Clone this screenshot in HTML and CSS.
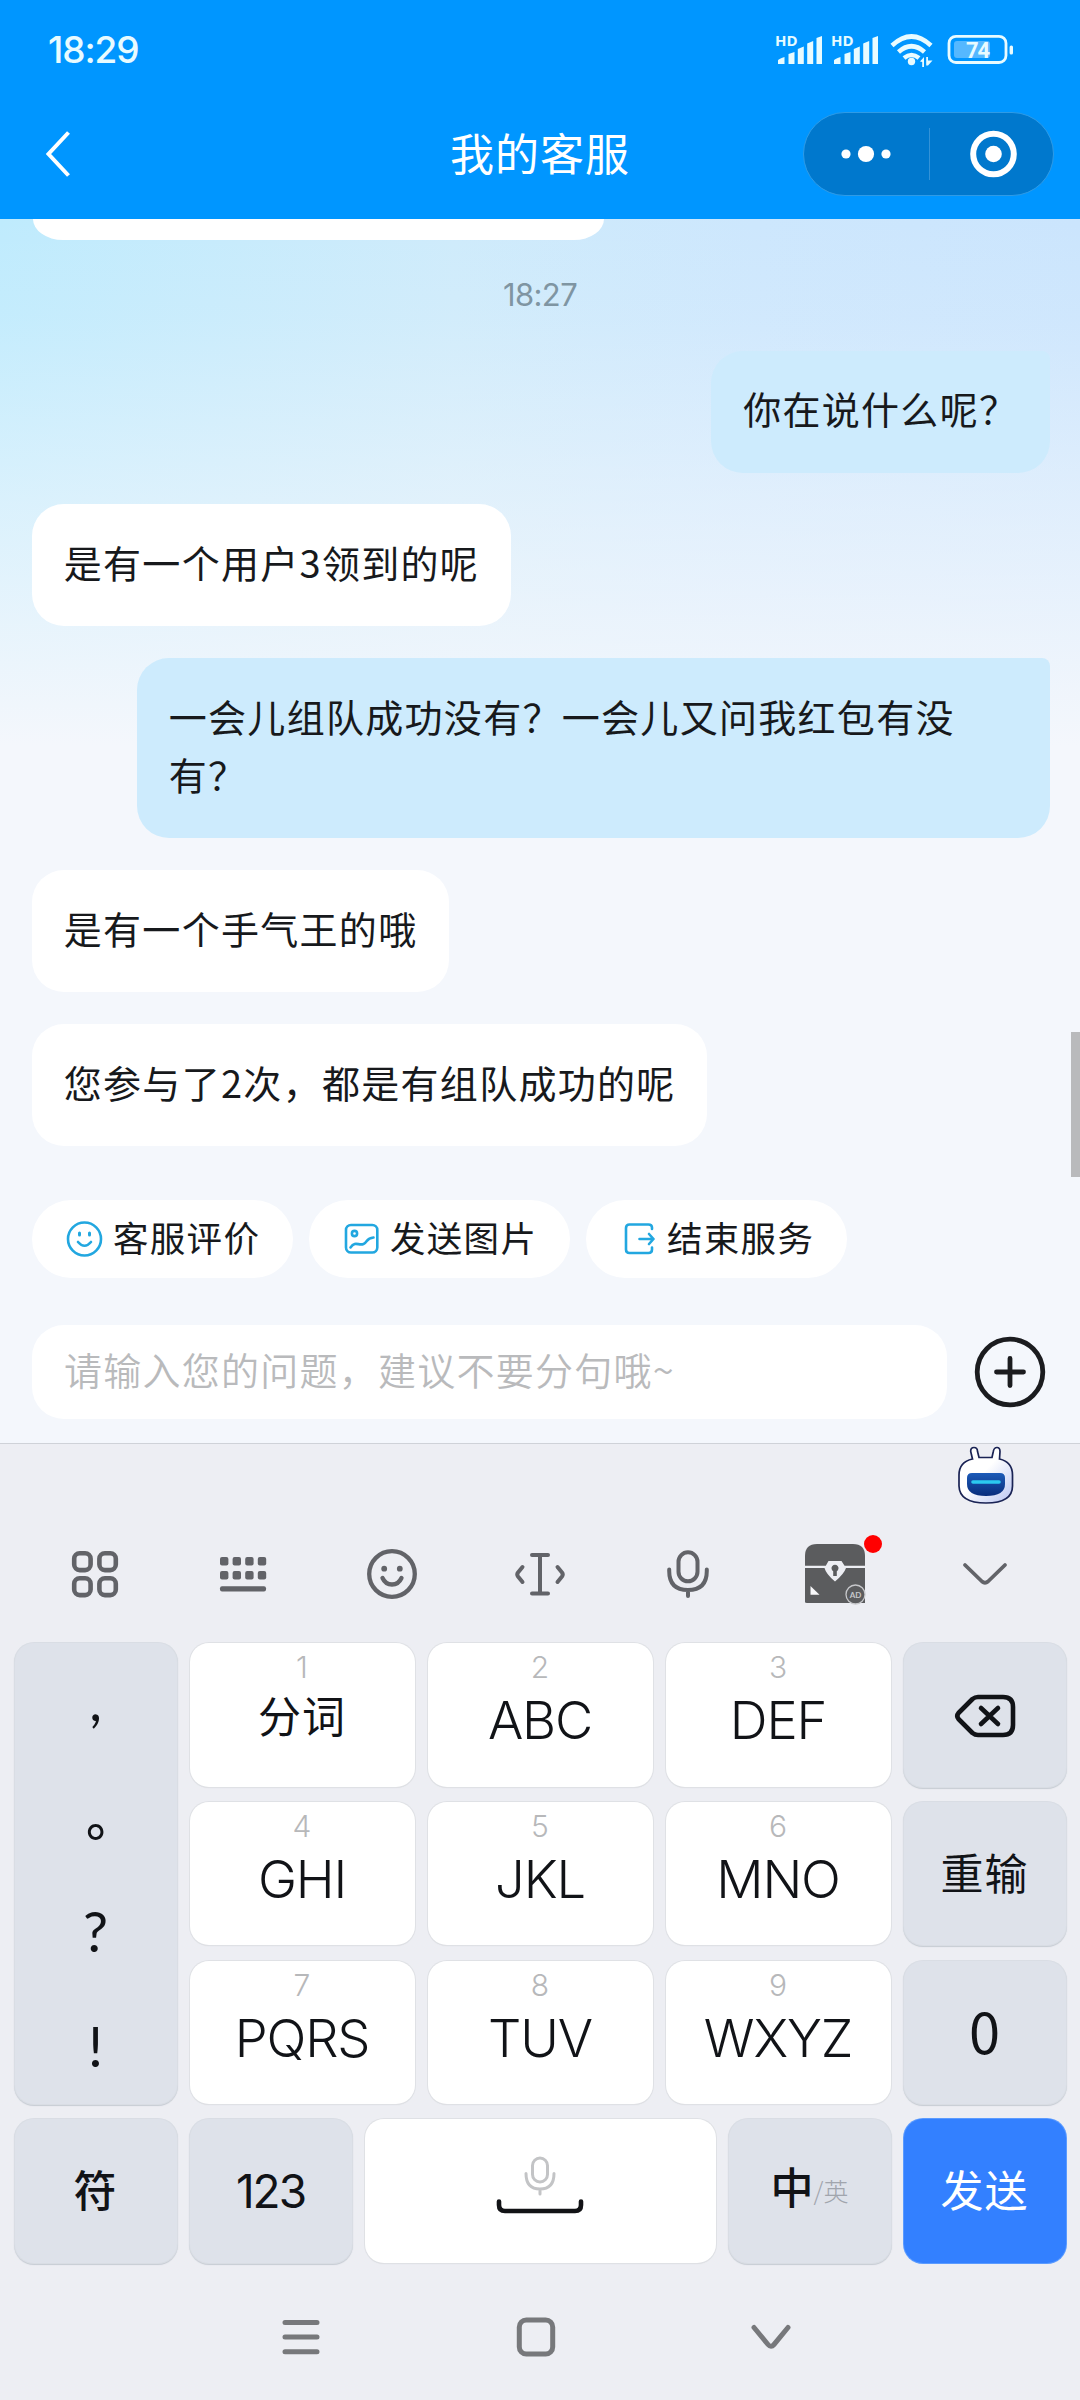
FILE: index.html
```html
<!DOCTYPE html>
<html lang="zh-CN">
<head>
<meta charset="utf-8">
<title>我的客服</title>
<link rel="stylesheet" href="styles.css">
</head>
<body>
<div class="phone">
  <header class="header">
    <div class="status">
      <span class="clock">18:29</span>
      <svg class="status-icons" width="240" height="40" viewBox="774 30 240 40" fill="#e8fbff">
        <g id="signal">
          <text x="775" y="46" class="hd">HD</text>
          <path d="M778 64v-3.500q0-1.500 6.500-3.500v7zM788.500 64v-10l6-2v12zM797.800 64v-15l6-2.500v17.500zM807.200 64v-20.500l6-2.500v23zM816.500 64v-26l5.500-2v28z"/>
        </g>
        <use href="#signal" x="56"/>
        <g fill="none" stroke="#e8fbff" stroke-width="4.600">
          <path d="M892 45.500Q911.500 27.500 931 45.500"/>
          <path d="M898.500 52Q911.500 40.500 924.500 52"/>
          <path d="M904 58Q911.500 52 919 58"/>
        </g>
        <circle cx="911.500" cy="61.500" r="3.700"/>
        <path d="M920 61.500l4-4.500v10h-1.800v-5zM926.200 57h1.800v3.500h4.500l-4.500 5h-1.800z"/>
        <rect x="949" y="36.300" width="57" height="26.200" rx="7" fill="none" stroke="#e8fbff" stroke-width="2.800"/>
        <rect x="954" y="41" width="36" height="17" rx="3" fill="#55b8ff"/>
        <rect x="1009.600" y="45.500" width="3.400" height="9" rx="1.500"/>
        <text x="977.500" y="58" class="level" text-anchor="middle">74</text>
      </svg>
    </div>
    <div class="titlebar">
      <svg class="back" width="30" height="50" viewBox="0 0 30 50" fill="none" stroke="#fff" stroke-width="4"><path d="M27.500 3.500L7.500 25l20 21.500"/></svg>
      <h1>我的客服</h1>
      <div class="capsule">
        <svg width="125" height="60" viewBox="0 0 125 60" fill="#fff"><circle cx="42" cy="30" r="4.600"/><circle cx="62" cy="30" r="8.100"/><circle cx="82" cy="30" r="4.600"/></svg>
        <i class="divider"></i>
        <svg width="123" height="60" viewBox="0 0 123 60" fill="#fff"><circle cx="63.500" cy="30" r="20.300" fill="none" stroke="#fff" stroke-width="6"/><circle cx="63.500" cy="30" r="8.300"/></svg>
      </div>
    </div>
  </header>

  <main class="chat">
    <div class="bubble previous"></div>
    <time class="stamp">18:27</time>
    <section class="messages">
      <p class="bubble mine">你在说什么呢？</p>
      <p class="bubble">是有一个用户3领到的呢</p>
      <p class="bubble mine">一会儿组队成功没有？一会儿又问我红包有没有？</p>
      <p class="bubble">是有一个手气王的哦</p>
      <p class="bubble">您参与了2次，都是有组队成功的呢</p>
    </section>
    <i class="scrollbar"></i>
    <nav class="chips">
      <button class="chip"><svg width="41" height="40" viewBox="0 0 41 40" fill="none" stroke="#22a7e0" stroke-width="2.600" stroke-linecap="round"><circle cx="20.500" cy="20" r="16.500"/><path stroke-width="3" d="M15.500 14v2M25.500 14v2"/><path d="M14 23q6.500 7.500 13 0"/></svg><span>客服评价</span></button>
      <button class="chip"><svg width="41" height="40" viewBox="0 0 41 40" fill="none" stroke="#22a7e0" stroke-width="2.600" stroke-linecap="round"><rect x="5" y="6" width="31.300" height="27.500" rx="5"/><circle cx="13.500" cy="14.500" r="2.600"/><path d="M9.500 28.500c5-7 8-1.500 13-3.500 4-1.500 2.500-6 10-6.500"/></svg><span>发送图片</span></button>
      <button class="chip"><svg width="41" height="40" viewBox="0 0 41 40" fill="none" stroke="#22a7e0" stroke-width="2.600" stroke-linecap="round" stroke-linejoin="round"><path d="M34 10V8.500q0-3-3.500-3h-19Q8 5.500 8 9v21.500q0 3.500 3.500 3.500h19q3.500 0 3.500-3.500v-2M21.500 20h14M31 15l4.500 5-4.500 5"/></svg><span>结束服务</span></button>
    </nav>
    <div class="composer">
      <div class="field">请输入您的问题，建议不要分句哦~</div>
      <svg width="72" height="72" viewBox="0 0 72 72" fill="none" stroke="#1b1c1f" stroke-width="4.800" stroke-linecap="round"><circle cx="36" cy="36" r="32.800"/><path d="M36 22.500v27M22.500 36h27"/></svg>
    </div>
  </main>

  <section class="keyboard">
    <div class="assistant">
      <svg width="58" height="60" viewBox="0 0 58 60">
        <defs><linearGradient id="shell" x1="0" y1="0" x2="1" y2="1"><stop offset=".45" stop-color="#fff"/><stop offset="1" stop-color="#b9c4f2"/></linearGradient>
        <linearGradient id="visor" x1="0" y1="0" x2="0" y2="1"><stop offset="0" stop-color="#1c5bb8"/><stop offset="1" stop-color="#082c7c"/></linearGradient></defs>
        <path d="M15.500 14L13.700 6.500Q13.500 2.500 17 2.500T20.500 6.500L22 12.500H35L36.300 6.500Q37 2.500 40 2.500T43 6.500L42.500 14Q55.500 17 55.500 30V41Q55.500 58 29 58T2 41V30Q2 17 15.500 14Z" fill="url(#shell)" stroke="#1a2354" stroke-width="1.700"/>
        <path d="M15 28H43Q48 28 48 33V39Q48 51 29 51T10 39V33Q10 28 15 28Z" fill="url(#visor)"/>
        <path d="M16 37H42" stroke="#2bc9ef" stroke-width="3.600" stroke-linecap="round"/>
      </svg>
    </div>
    <div class="tools">
      <svg viewBox="-30 -30 60 60" stroke-width="4.600"><rect x="-20.800" y="-20.700" width="16.400" height="16.800" rx="5.500"/><rect x="4.400" y="-20.700" width="16.400" height="16.800" rx="5.500"/><rect x="-20.800" y="4.300" width="16.400" height="16.800" rx="5.500"/><rect x="4.400" y="4.300" width="16.400" height="16.800" rx="5.500"/></svg>
      <svg viewBox="-30 -30 60 60"><g fill="#626368" stroke="none"><g id="keysrow"><rect x="-23" y="-17" width="8.400" height="8.500" rx="2"/><rect x="-10.400" y="-17" width="8.400" height="8.500" rx="2"/><rect x="2.200" y="-17" width="8.400" height="8.500" rx="2"/><rect x="14.800" y="-17" width="8.400" height="8.500" rx="2"/></g><use href="#keysrow" y="14"/><rect x="-23" y="12.300" width="46" height="5.200" rx="2"/></g></svg>
      <svg viewBox="-30 -30 60 60" stroke-width="4.300"><circle r="22.800"/><g fill="#626368" stroke="none"><circle cx="-7.800" cy="-5.300" r="2.900"/><circle cx="7.800" cy="-5.300" r="2.900"/></g><path d="M-9.500 4Q-6.500 10.500 0 10.500T9.500 4"/></svg>
      <svg viewBox="-30 -30 60 60" stroke-width="4"><path d="M-8-19H8M-8 19.500H8M0-19V19.500M-17.500-7L-22 -1.500Q-23.500 .5-22 2.500L-17.500 8M17.500-7L22-1.500Q23.500 .5 22 2.500L17.500 8"/></svg>
      <svg viewBox="-30 -30 60 60" stroke-width="4"><rect x="-9.500" y="-21.700" width="19" height="29" rx="9.500"/><path d="M-18.800-4.500V-3Q-18.800 16 0 16T18.800-3V-4.500M0 16V22"/></svg>
      <div class="chest">
        <svg viewBox="-30 -30 60 60"><path d="M-30 28V-18Q-30-30-18-30H18Q30-30 30-18V29H-28Q-30 29-30 28Z" fill="#5b5c5e"/><path d="M-30-8.200H30V-6H-30ZM-10.500-6L-6.500-13H6.500L11-6Q9 0 0 7.500Q-9 0-10.500-6Z" fill="#edeef3"/><path d="M-1.800 2V-2.800A3.500 3.500 0 1 1 1.800-2.800V2Z" fill="#5b5c5e"/><path d="M-24.500 12V20.800H-15.500Z" fill="#f8f8fa"/><circle cx="20.500" cy="20.500" r="9.500" fill="#5b5c5e" stroke="#c7c8cb" stroke-width="1.300"/><text x="20.500" y="23.500" class="ad" text-anchor="middle">AD</text></svg>
        <i class="badge"></i>
      </div>
      <svg viewBox="-30 -30 60 60" stroke-width="3.800"><path d="M-20-9L-3 7.500Q0 10 3 7.500L20-9"/></svg>
    </div>
    <div class="keys">
      <div class="key side punct"><span>,</span><span class="stop">。</span><span>?</span><span>!</span></div>
      <div class="key"><small>1</small><b class="zh">分词</b></div>
      <div class="key"><small>2</small><b>ABC</b></div>
      <div class="key"><small>3</small><b>DEF</b></div>
      <div class="key side"><svg width="64" height="50" viewBox="-32 -26 64 50" fill="none" stroke="#111317" stroke-width="4.600" stroke-linecap="round" stroke-linejoin="round"><path d="M-7-19H18Q28-19 28-9V9Q28 19 18 19H-7Q-10 19-12.500 17L-26.500 3Q-29 0-26.500-3L-12.500-17Q-10-19-7-19ZM-4-8L13 8M13-8L-4 8"/></svg></div>
      <div class="key"><small>4</small><b>GHI</b></div>
      <div class="key"><small>5</small><b>JKL</b></div>
      <div class="key"><small>6</small><b>MNO</b></div>
      <div class="key side word">重输</div>
      <div class="key"><small>7</small><b>PQRS</b></div>
      <div class="key"><small>8</small><b>TUV</b></div>
      <div class="key"><small>9</small><b>WXYZ</b></div>
      <div class="key side zero">0</div>
    </div>
    <div class="keys-bottom">
      <div class="key side word medium">符</div>
      <div class="key side num">123</div>
      <div class="key space"><svg width="100" height="70" viewBox="-50 -35 100 70" fill="none" stroke-linecap="round"><g stroke="#c3c4c6" stroke-width="3"><rect x="-7.500" y="-33" width="15" height="24" rx="7.500"/><path d="M-14-17.500Q-14-2 0-2T14-17.500M0-2V3"/></g><path d="M-41 10.500V14Q-41 20-35 20H35Q41 20 41 14V10.500" stroke="#121316" stroke-width="4.600"/></svg></div>
      <div class="key side lang">中<small>/英</small></div>
      <div class="key send word">发送</div>
    </div>
    <div class="sysnav">
      <svg viewBox="-30 -30 60 60"><path d="M-16-14.500H16M-16 0H16M-16 14.700H16"/></svg>
      <svg viewBox="-30 -30 60 60"><rect x="-16.700" y="-17" width="33.400" height="34" rx="7"/></svg>
      <svg viewBox="-30 -30 60 60"><path d="M-17-9.500L-3 7.500Q0 11 3 7.500L17-9.500"/></svg>
    </div>
  </section>
</div>
</body>
</html>
```
FILE: styles.css
```css
* { box-sizing: border-box; margin: 0; padding: 0; }
body { background: #edeef3; }
svg { display: block; flex: none; overflow: visible; }
button { border: 0; }

.phone {
  width: 1080px;
  height: 2400px;
  overflow: hidden;
  display: flex;
  flex-direction: column;
  font-family: "Noto Sans CJK SC", sans-serif;
  color: #17191c;
}

/* header */
.header { height: 219px; background: #0096ff; color: #fff; flex: none; }
.status {
  height: 100px;
  padding: 0 66px 0 48px;
  display: flex;
  align-items: center;
  justify-content: space-between;
}
.clock { font: 500 37px/40px Inter, sans-serif; color: #e8fbff; letter-spacing: -1.100px; }
.hd { font: 700 15px "Open Sans", sans-serif; }
.level { font: 700 22px Roboto, sans-serif; letter-spacing: -1px; }
.titlebar {
  height: 108px;
  padding: 0 26px 0 41px;
  display: grid;
  grid-template-columns: 250px 1fr 251px;
  align-items: center;
}
.titlebar h1 {
  font-size: 44px;
  font-weight: 400;
  line-height: 60px;
  letter-spacing: 1px;
  text-align: center;
  padding: 0 14px 5px 0;
}
.capsule {
  height: 84px;
  border-radius: 42px;
  border: 1px solid #2f9be6;
  background: #0078cd;
  display: flex;
  align-items: center;
}
.divider { width: 1px; height: 52px; background: #3393d8; }

/* conversation */
.chat {
  position: relative;
  height: 1224px;
  flex: none;
  background:
    linear-gradient(to bottom, rgba(244,247,252,0) 0, rgba(244,247,252,.1) 8%, rgba(244,247,252,.5) 23%, #f4f7fc 43%),
    linear-gradient(to right, #bfebfd 0, #ceebfb 42%, #cde7fd 70%, #cbe5fd 100%);
}
.bubble {
  max-width: 913px;
  padding: 28.750px 31.750px 34.750px;
  border-radius: 32px;
  background: #fff;
  font-size: 38px;
  line-height: 58.500px;
  letter-spacing: 1.300px;
}
.bubble.mine { align-self: flex-end; background: #cdebfd; border-top-right-radius: 8px; }
.bubble.previous { width: 571px; height: 21px; margin-left: 33px; padding: 0; border-radius: 0 0 30px 30px / 0 0 21px 21px; }
.stamp {
  display: block;
  margin-top: 35px;
  height: 42px;
  font: 400 31px/40px Inter, sans-serif;
  letter-spacing: -0.600px;
  text-align: center;
  color: #7f95a2;
}
.messages {
  height: 850px;
  padding: 33.500px 30px 0 32px;
  display: flex;
  flex-direction: column;
  align-items: flex-start;
  gap: 31.700px;
}
.scrollbar { position: absolute; right: 0; top: 813px; width: 9px; height: 145px; background: #b9babc; }
.chips { margin-top: 33px; padding-left: 32px; display: flex; gap: 16px; }
.chip {
  width: 261px;
  height: 78px;
  border-radius: 39px;
  background: #fff;
  padding-left: 32px;
  display: flex;
  align-items: center;
  gap: 8px;
  font: 400 35.500px/60px "Noto Sans CJK SC", sans-serif;
  letter-spacing: 1.300px;
  color: #17191c;
  white-space: nowrap;
}
.chip span { padding-bottom: 5px; }
.composer { margin-top: 47px; padding: 0 34px 0 32px; display: flex; align-items: center; justify-content: space-between; }
.field {
  width: 915px;
  height: 94px;
  padding-left: 32px;
  border-radius: 32px;
  background: #fff;
  color: #b9babc;
  font-size: 38px;
  font-weight: 350;
  line-height: 88px;
  letter-spacing: 1.250px;
}

/* keyboard */
.keyboard { flex: 1; background: #edeef3; border-top: 1px solid #cfd2d8; }
.assistant { height: 60px; padding: 1px 65px 0 0; display: flex; justify-content: flex-end; }
.tools { height: 139px; padding: 0 21px; display: grid; grid-template-columns: repeat(7, 148.300px); place-items: center; }
.tools > svg { width: 60px; height: 60px; fill: none; stroke: #626368; stroke-linecap: round; stroke-linejoin: round; }
.chest { position: relative; left: -1.500px; }
.chest svg { width: 60px; height: 60px; }
.badge { position: absolute; right: -17px; top: -9px; width: 18px; height: 18px; border-radius: 50%; background: #f00; }
.ad { font: 700 8px Lato, sans-serif; fill: #c7c8cb; }
.keys {
  padding: 0 14.500px;
  display: grid;
  grid-template-columns: 162px repeat(3, 1fr) 162px;
  grid-auto-rows: 143.500px;
  gap: 15.300px 13px;
}
.key {
  border-radius: 19px;
  background: #fff;
  box-shadow: 0 0 0 1px #dfe1e5, 0 1px 1px 0 #d2d5da;
  display: flex;
  flex-direction: column;
  align-items: center;
  font-family: Inter, "Noto Sans CJK SC", sans-serif;
  color: #111317;
}
.key small { font-size: 30px; line-height: 36px; margin-top: 6px; color: #b7b8ba; font-weight: 300; }
.key b { font-size: 52.500px; line-height: 60px; margin-top: 5px; font-weight: 300; letter-spacing: -1.200px; }
.key b.zh { font: 400 43px/60px "Noto Sans CJK SC", sans-serif; letter-spacing: 1px; margin-top: -1px; }
.key.side { background: #dee2ea; box-shadow: 0 0 0 1px #d9dde4, 0 1px 1px 1px #c6cbd3; justify-content: center; }
.key.punct { grid-row: span 3; font: 400 56px Lato, sans-serif; justify-content: flex-start; }
.punct span { height: 115.500px; line-height: 113px; }
.punct .stop { font: 500 50px/143px "Noto Sans CJK TC", sans-serif; }
.key.word { font: 400 43px/60px "Noto Sans CJK SC", sans-serif; letter-spacing: 1px; padding-bottom: 6px; }
.key.medium { font-weight: 500; }
.key.zero { font: 400 56px/60px "Noto Sans CJK SC", sans-serif; padding-bottom: 4px; }
.key.num { font-size: 46px; font-weight: 400; letter-spacing: -2px; }
.keys-bottom {
  margin-top: 15px;
  padding: 0 14.500px;
  display: grid;
  grid-template-columns: 162px 162px 1fr 162px 162px;
  grid-auto-rows: 144px;
  gap: 13px;
}
.space { justify-content: center; }
.key.lang { flex-direction: row; align-items: center; font: 500 43px/60px "Noto Sans CJK SC", sans-serif; padding: 0 0 12px; }
.key.lang small { font-size: 25px; margin: 10px 0 0; color: #a1a5ad; }
.key.send { background: #3380ff; box-shadow: 0 0 0 1px #5b9bff; color: #fff; justify-content: center; padding-bottom: 7px; }
.sysnav { margin-top: 44px; padding: 0 192px 0 183px; display: grid; grid-template-columns: repeat(3, 235px); place-items: center; }
.sysnav svg { width: 60px; height: 60px; fill: none; stroke: #77787b; stroke-width: 5; stroke-linecap: round; stroke-linejoin: round; }
```
